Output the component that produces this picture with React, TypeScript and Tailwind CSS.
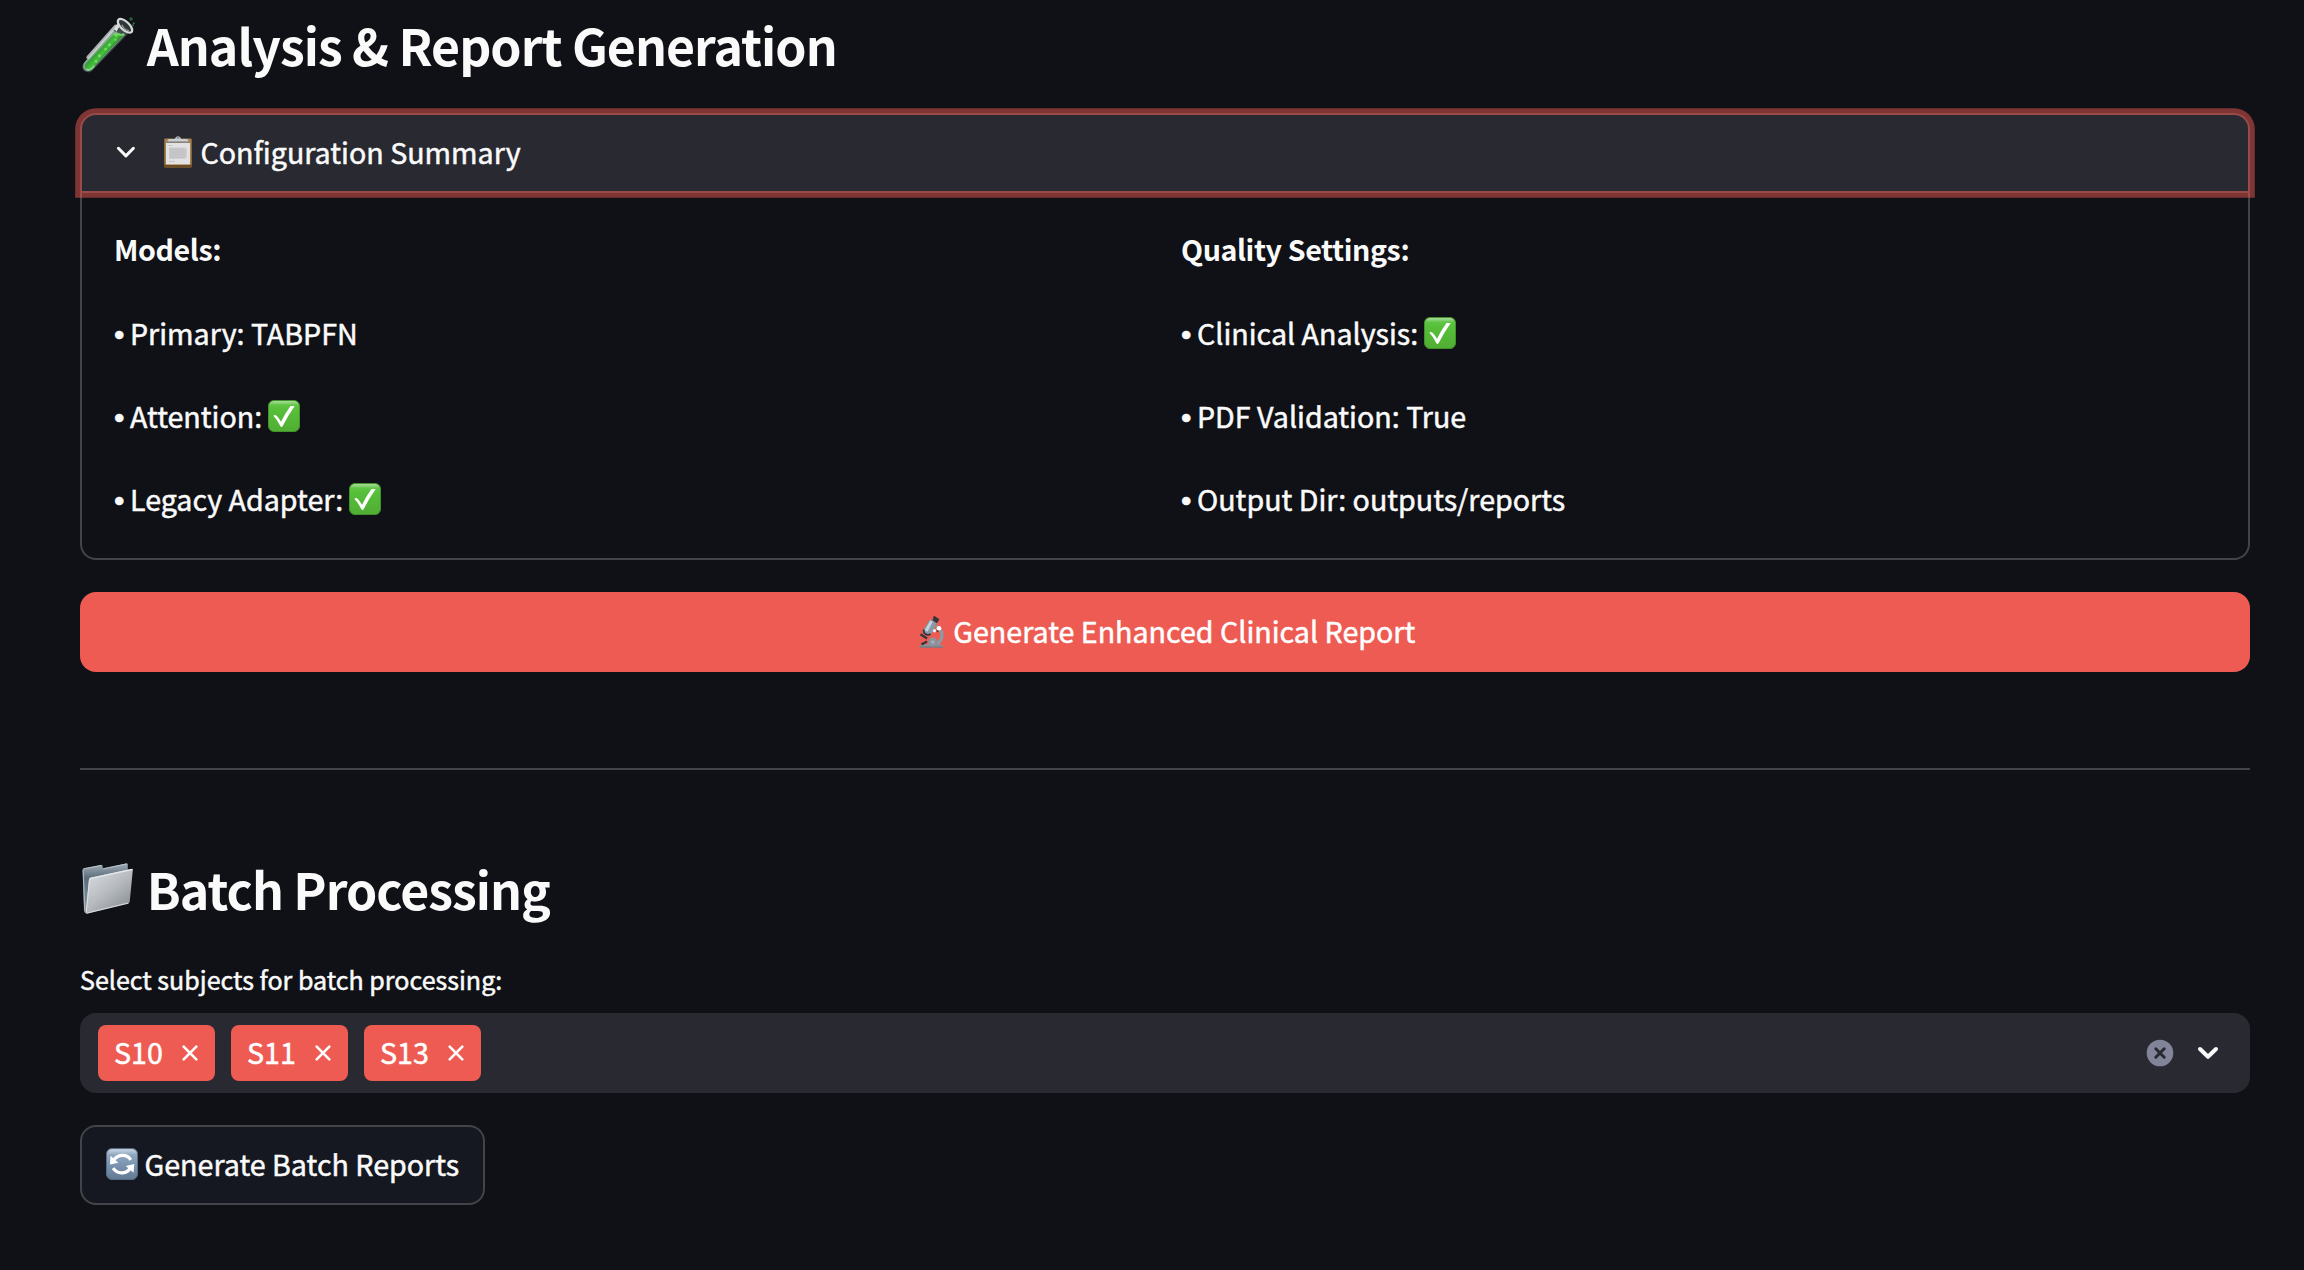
import type { ReactNode } from "react";

function TestTubeIcon() {
  return (
    <svg className="h-[60px] w-[60px] shrink-0" viewBox="0 0 60 60" fill="none">
      <defs>
        <linearGradient id="tube-liquid" x1="15" y1="29" x2="29" y2="41" gradientUnits="userSpaceOnUse">
          <stop offset="0" stopColor="#7fd873" />
          <stop offset="0.35" stopColor="#2f9a31" />
          <stop offset="0.7" stopColor="#46c23c" />
          <stop offset="1" stopColor="#1f6a24" />
        </linearGradient>
      </defs>
      <g transform="translate(-1 .8)">
        <path d="M38.500 9.500 4.600 48.200c-2.600 3.400-1.200 7.400 1.600 8.600 2.800 1.500 6 .6 8.200-2.200L50.500 17.500Z" fill="#3d4a48" />
        <path d="M33 15.500 5.400 47.800c-2 3-1.200 6.600 1.300 8 2.400 1.200 5 .3 7-2L45.500 20.500Z" fill="#8ba595" />
        <path d="M34.500 20 6.800 48.800c-1.600 2.600-.9 5.200 1 6.300 2 1 4 .3 5.600-1.600L45.500 19.500c-4 1.500-7.500-1-11 .5Z" fill="url(#tube-liquid)" />
        <path d="M36.500 11.500 9 42.500" stroke="#dfe6e3" strokeWidth="3.400" strokeLinecap="round" opacity=".75" />
        <path d="M35 14 40 6l3 1-5.500 10Z" fill="#dcdedd" />
        <path d="M34.500 20c4-1.500 7 1 11-.5" stroke="#6fd562" strokeWidth="2" />
        <ellipse cx="46" cy="11" rx="9" ry="4.200" transform="rotate(43 46 11)" fill="#303737" stroke="#d6d8d8" strokeWidth="2.200" />
        <path d="M43 10c1 3 4 5.500 7 6" stroke="#8d9494" strokeWidth="1.400" />
        <g fill="#7be06c">
          <circle cx="30.500" cy="30" r="1.400" />
          <circle cx="36.500" cy="25" r="1.100" />
          <circle cx="26.500" cy="34.500" r="1.200" />
          <circle cx="20.500" cy="41" r="1.500" />
          <circle cx="17" cy="46.500" r="1.200" />
          <circle cx="37" cy="20.500" r="1.100" />
        </g>
        <path d="M8 54.500c2.500 1.500 5-.5 7-3" stroke="#82dd8a" strokeWidth="1.600" strokeLinecap="round" />
        <circle cx="52" cy="4.200" r="1.800" fill="#245f33" />
        <circle cx="54.800" cy="8.500" r="1" fill="#2c7a3c" />
        <path d="M54 11.500v-2" stroke="#245f33" strokeWidth="2" />
      </g>
    </svg>
  );
}

function FolderIcon() {
  return (
    <svg className="h-[60px] w-[60px] shrink-0" viewBox="0 0 60 60" fill="none">
      <defs>
        <linearGradient id="folder-front" x1="14" y1="14" x2="44" y2="52" gradientUnits="userSpaceOnUse">
          <stop offset="0" stopColor="#d3d8dd" />
          <stop offset="0.5" stopColor="#b7bbbf" />
          <stop offset="1" stopColor="#8b9196" />
        </linearGradient>
        <linearGradient id="folder-back" x1="10" y1="6" x2="12" y2="54" gradientUnits="userSpaceOnUse">
          <stop offset="0" stopColor="#a4b0ba" />
          <stop offset="0.3" stopColor="#596a78" />
          <stop offset="1" stopColor="#8c98a1" />
        </linearGradient>
      </defs>
      <path d="M3.500 10.500 21.300 7q1-.2 1.200.8l.4 2.800L46.600 5.500q1.200-.2 1.200.9V14L7 55.500q-2.500 0-3-2.500L2.500 12q0-1.200 1-1.500Z" fill="url(#folder-back)" />
      <path d="M3.500 10.800 21.500 7.300M23 10.800 46.800 5.800" stroke="#b9c4cc" strokeWidth="1" />
      <path d="M3.200 12 4.800 52.500" stroke="#aab5bd" strokeWidth="1.200" />
      <path d="M10.500 19.800 51.500 11q1.400-.2 1.300 1.200L49.800 43q-.2 2-2 2.500L7.300 55.300q-1.800.4-1.600-1.500L9 21.500q.2-1.400 1.500-1.700Z" fill="url(#folder-front)" />
      <path d="M10.300 20.400 52 11.500" stroke="#e3e8ec" strokeWidth="1.400" strokeLinecap="round" />
      <path d="M9.500 21 6.300 54" stroke="#dfe3e6" strokeWidth="1" />
      <path d="M6.800 55.200 48 45.200" stroke="#d0d4d7" strokeWidth="1.200" strokeLinecap="round" />
    </svg>
  );
}

function ClipboardIcon() {
  return (
    <svg className="relative -top-px h-8 w-[30px] shrink-0" viewBox="0 0 30 32" fill="none">
      <rect x="1.300" y="2.500" width="27.400" height="29" rx="1.200" fill="#a98047" />
      <rect x="1.300" y="28.500" width="27.400" height="3" rx="1" fill="#6e4b1e" />
      <rect x="3" y="5.500" width="24" height="23" fill="#e2e2e3" />
      <rect x="3" y="5" width="24" height="2" fill="#8b8174" />
      <path d="M5.500 9.500h4" stroke="#c6c6c8" />
      <path d="M6 11.500h17l.8 2v7.500l-1.500 1.800H6Z" fill="#c9c9cb" />
      <path d="M7 13.500h14M7 16h15M7 18.500h15M7 21h13" stroke="#bcbcbf" strokeWidth=".8" />
      <path d="M6 25.500h6" stroke="#c6c6c8" />
      <path d="M4.500 4.500Q4.500 3 6.500 3h5.300l1-1.800Q15-.6 17.200 1.200l1 1.800h5.300q2 0 2 1.500v1h-21Z" fill="#b9bec6" />
      <path d="M5.500 4h19" stroke="#d9dde3" strokeWidth="1" />
      <circle cx="15" cy="1.800" r="1" fill="#7d8490" />
    </svg>
  );
}

function CheckIcon() {
  return (
    <svg className="h-8 w-8 shrink-0" viewBox="0 0 32 32" fill="none">
      <defs>
        <linearGradient id="check-bg" x1="0" y1="0" x2="0" y2="32" gradientUnits="userSpaceOnUse">
          <stop offset="0" stopColor="#63b84c" />
          <stop offset="0.05" stopColor="#a3dc93" />
          <stop offset="0.16" stopColor="#5fc546" />
          <stop offset="0.3" stopColor="#57bf3a" />
          <stop offset="1" stopColor="#50ad33" />
        </linearGradient>
      </defs>
      <rect x=".5" y=".5" width="31" height="31" rx="5.500" fill="url(#check-bg)" stroke="#42922b" />
      <path d="M5.400 15.800q1.200-1.600 2.900-.3 3 2.800 4.700 6.200Q17 13.500 22.500 6h4.200Q20 15.500 14.600 26.300q-1.100 1.400-2.200 0Q9.500 20 5.400 15.800Z" fill="#fff" />
    </svg>
  );
}

function MicroscopeIcon() {
  return (
    <svg className="h-8 w-8 shrink-0" viewBox="0 0 32 32" fill="none">
      <path d="M21 10.500c8 3.500 7.500 13 1 17.500" stroke="#8d9aa4" strokeWidth="3.400" />
      <path d="M4.500 31.500v-2l6-1.300h13.500l4 1.300v2Z" fill="#8c9299" />
      <path d="M4.500 31h23.500" stroke="#6c7178" />
      <path d="M5.500 18.300 12 22.500M6.500 28.500l5.500-3" stroke="#32383e" strokeWidth="2.400" />
      <circle cx="17.800" cy="26" r="4.500" fill="#8b949c" />
      <circle cx="17.800" cy="26" r="1.800" fill="#a8b0b7" />
      <path d="M15 3.200 22 7l-5.500 10.500q-2.500 2.500-6 .8-3-2-1.800-5.300Z" fill="#8799a6" />
      <path d="m15.300 4.500 2.500 1.300-5.300 10-2.700-1.500Z" fill="#c0d3df" />
      <path d="M8.800 13.500q-.8 3 1.900 4.800 2.600 1.200 5-.3" stroke="#2f363c" strokeWidth="1.600" />
      <path d="m18 3 4.500 3.300M18.500.8l5.300 3.400" stroke="#32363b" strokeWidth="2.400" />
      <circle cx="24" cy="12.300" r="2.300" fill="#fff" />
      <circle cx="19.500" cy="14.800" r="1.700" fill="#e8eef2" />
      <circle cx="22.500" cy="15.300" r="1" fill="#3b4146" />
    </svg>
  );
}

function RefreshIcon() {
  return (
    <svg className="relative -top-px h-8 w-8 shrink-0" viewBox="0 0 32 32" fill="none">
      <defs>
        <linearGradient id="refresh-bg" x1="0" y1="0" x2="0" y2="32" gradientUnits="userSpaceOnUse">
          <stop offset="0" stopColor="#8fa3b8" />
          <stop offset="0.06" stopColor="#c3d0de" />
          <stop offset="0.22" stopColor="#8fa6c0" />
          <stop offset="0.6" stopColor="#7690ad" />
          <stop offset="1" stopColor="#61788f" />
        </linearGradient>
      </defs>
      <rect x=".5" y=".5" width="31" height="31" rx="5.500" fill="url(#refresh-bg)" stroke="#566c84" />
      <path d="M7.500 13C10.500 6.500 20.500 5 24.800 11.800" stroke="#fff" strokeWidth="3.200" />
      <path d="M4.500 7.800 4 16.500l8.300-1.800Z" fill="#fff" />
      <path d="M24.500 19.500C21.500 26 11.500 27 7.200 20.200" stroke="#fff" strokeWidth="3.200" />
      <path d="M27.500 24.700 28.300 16l-8.500 2Z" fill="#fff" />
    </svg>
  );
}

function Heading({ icon, children }: { icon: ReactNode; children: ReactNode }) {
  return (
    <h2 className="flex h-[60px] items-center gap-[6.700px] text-[50px] leading-[60px] font-bold tracking-[-0.970px] whitespace-nowrap">
      {icon}
      <span>{children}</span>
    </h2>
  );
}

function Item({ children, checked = false }: { children: ReactNode; checked?: boolean }) {
  return (
    <li className="flex items-center leading-[51.2px]">
      <span className="relative top-[2px] w-[16px] shrink-0 font-['Liberation_Sans'] text-[30px]">•</span>
      <span>{children}</span>
      {checked && (
        <span className="ml-[6px] flex">
          <CheckIcon />
        </span>
      )}
    </li>
  );
}

function Tag({ label }: { label: string }) {
  return (
    <span className="flex h-14 w-[117px] items-center justify-between rounded-lg bg-[#ed5b53] pr-[17.500px] pl-4 text-white">
      <span className="pb-[3px]">{label}</span>
      <svg className="h-4 w-4" viewBox="0 0 16 16" fill="none" stroke="currentColor" strokeWidth="2.600" strokeLinecap="round">
        <path d="M1.700 1.700 14.300 14.300M14.300 1.700 1.700 14.300" />
      </svg>
    </span>
  );
}

export default function App() {
  return (
    <main className="h-[1270px] w-[2304px] overflow-hidden bg-[#0f1116] pt-[14px] pl-20 font-['Noto_Sans_CJK_SC',sans-serif] text-[28.63px] leading-[48px] text-[#fafafa]">
      <div className="flex w-[2170px] flex-col">
        <Heading icon={<TestTubeIcon />}>Analysis &amp; Report Generation</Heading>

        <section className="mt-[39px]">
          <header className="relative z-10 flex h-20 items-center rounded-t-2xl border-2 border-[#984b49] bg-[#282931] pl-[34px] shadow-[0_0_0_4.8px_rgba(240,90,82,0.5)]">
            <svg className="h-5 w-5" viewBox="0 0 20 20" fill="none" stroke="currentColor" strokeWidth="3" strokeLinecap="round" strokeLinejoin="round">
              <path d="M2.400 5.300 9.900 12.900 17.400 5.300" />
            </svg>
            <span className="ml-[26.500px] flex items-center gap-2">
              <ClipboardIcon />
              <span className="pb-[3px] [-webkit-text-stroke:0.5px]">Configuration Summary</span>
            </span>
          </header>
          <div className="grid h-[367px] grid-cols-2 gap-8 rounded-b-2xl border-x-2 border-b-2 border-[#434448] px-8 pt-[30px]">
            <div>
              <h3 className="leading-[51.2px] font-bold tracking-[-0.4px]">Models:</h3>
              <ul className="mt-[33px] flex flex-col gap-[31.700px] [-webkit-text-stroke:0.5px]">
                <Item>Primary: TABPFN</Item>
                <Item checked>Attention:</Item>
                <Item checked>Legacy Adapter:</Item>
              </ul>
            </div>
            <div>
              <h3 className="leading-[51.2px] font-bold tracking-[-0.4px]">Quality Settings:</h3>
              <ul className="mt-[33px] flex flex-col gap-[31.700px] [-webkit-text-stroke:0.5px]">
                <Item checked>Clinical Analysis:</Item>
                <Item>PDF Validation: True</Item>
                <Item>Output Dir: outputs/reports</Item>
              </ul>
            </div>
          </div>
        </section>

        <button className="mt-8 flex h-20 items-center justify-center gap-[6.500px] rounded-2xl bg-[#ed5b53] text-white [-webkit-text-stroke:0.5px]">
          <MicroscopeIcon />
          <span className="pb-[3px]">Generate Enhanced Clinical Report</span>
        </button>

        <hr className="mt-24 h-0.5 border-0 bg-[#434448]" />

        <div className="mt-[88px]">
          <Heading icon={<FolderIcon />}>Batch Processing</Heading>
        </div>

        <label className="mt-[41px] text-[25.050px] leading-[40px] [-webkit-text-stroke:0.5px]">Select subjects for batch processing:</label>
        <div className="mt-[14px] flex h-20 items-center justify-between rounded-2xl bg-[#282931] pr-[30px] pl-[18px]">
          <div className="flex gap-4 [-webkit-text-stroke:0.5px]">
            <Tag label="S10" />
            <Tag label="S11" />
            <Tag label="S13" />
          </div>
          <div className="flex items-center gap-[22px]">
            <svg className="h-7 w-7" viewBox="0 0 28 28" fill="none">
              <circle cx="14" cy="14" r="13.300" fill="#82849a" />
              <path d="m9.800 9.800 8.400 8.400m0-8.400-8.400 8.400" stroke="#282931" strokeWidth="3" strokeLinecap="round" />
            </svg>
            <svg className="h-6 w-6" viewBox="0 0 24 24" fill="none" stroke="currentColor" strokeWidth="4" strokeLinecap="round" strokeLinejoin="round">
              <path d="M4 8 12 15.800 20 8" />
            </svg>
          </div>
        </div>

        <button className="mt-8 flex h-20 w-[405px] items-center gap-[6.500px] rounded-2xl border-2 border-[#434448] bg-[#151820] pl-6 whitespace-nowrap [-webkit-text-stroke:0.5px]">
          <RefreshIcon />
          <span className="pb-[3px]">Generate Batch Reports</span>
        </button>
      </div>
    </main>
  );
}
